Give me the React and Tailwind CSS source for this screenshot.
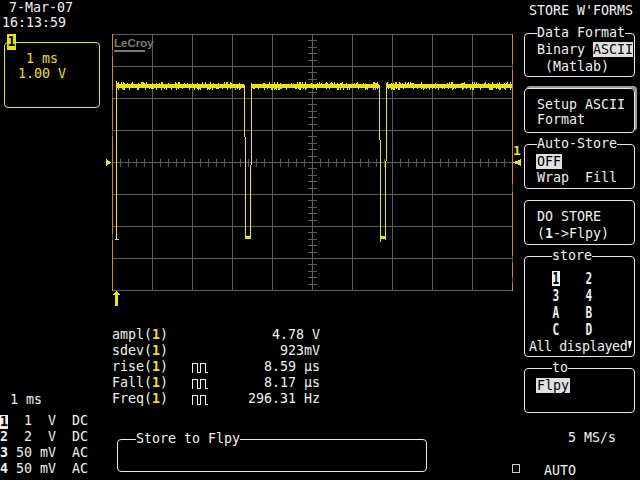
import React from "react";

const YEL = "#e8e800";
const GRID = "#5c5c5c";
const ORANGE = "#e08a00";

function rand(seed) {
  let s = seed;
  return () => {
    s = (s * 16807) % 2147483647;
    return s / 2147483647;
  };
}

function buildNoise() {
  const r = rand(12345);
  const ranges = [
    [5, 132],
    [140, 267],
    [275, 400],
  ];
  let d = "";
  for (const [a, b] of ranges) {
    for (let x = a; x < b; x++) {
      let top = 50;
      let bot = 54;
      if (r() < 0.3) top = 48 + Math.floor(r() * 2);
      if (r() < 0.3) bot = 55 + Math.floor(r() * 2);
      d += `M${x + 0.5} ${top}V${bot}`;
    }
  }
  return d;
}

const NOISE = buildNoise();

const TRACE =
  "M4.5 47V206M3 205.5H7" +
  "M132.5 51V103M133.5 103V205M133 202.5H139M133 203.5H139M133 204.5H139M138.5 205V131M139.5 131V49" +
  "M267.5 51V106M268.5 106V208M268 202.5H274M268 203.5H274M268 204.5H274M273.5 206V127M274.5 127V49";

function Grid() {
  const lines = [];
  for (let i = 1; i < 10; i++) {
    lines.push(<line key={"v" + i} x1={0.5 + 40 * i} y1={0} x2={0.5 + 40 * i} y2={257} stroke={GRID} />);
  }
  for (let j = 0; j <= 8; j++) {
    lines.push(<line key={"h" + j} x1={0} y1={0.5 + 32 * j} x2={401} y2={0.5 + 32 * j} stroke={GRID} />);
  }
  for (let k = 1; k < 40; k++) {
    if (k % 5 === 0) continue;
    const y = Math.round(6.4 * k) + 0.5;
    lines.push(<line key={"tv" + k} x1={196} y1={y} x2={205} y2={y} stroke={GRID} />);
  }
  for (let k = 1; k < 50; k++) {
    if (k % 5 === 0) continue;
    const x = 8 * k + 0.5;
    lines.push(<line key={"th" + k} x1={x} y1={125} x2={x} y2={133} stroke={GRID} />);
  }
  return (
    <svg width="400" height="256" viewBox="0 0 400 256" overflow="visible" shapeRendering="crispEdges" className="block overflow-visible">
      {lines}
      <line x1={0.5} y1={0} x2={0.5} y2={257} stroke={ORANGE} />
      <line x1={0.5} y1={16} x2={0.5} y2={22} stroke={GRID} />
      <line x1={0.5} y1={56} x2={0.5} y2={64} stroke={GRID} />
      <line x1={0.5} y1={96} x2={0.5} y2={102} stroke={GRID} />
      <line x1={0.5} y1={200} x2={0.5} y2={206} stroke={GRID} />
      <line x1={400.5} y1={0} x2={400.5} y2={257} stroke={ORANGE} />
      <line x1={400.5} y1={30} x2={400.5} y2={36} stroke={GRID} />
      <line x1={400.5} y1={150} x2={400.5} y2={158} stroke={GRID} />
      <line x1={400.5} y1={222} x2={400.5} y2={229} stroke={GRID} />
      <line x1={400.5} y1={243} x2={400.5} y2={249} stroke={GRID} />
      <path d={NOISE} stroke={YEL} strokeWidth="1" fill="none" />
      <path d={TRACE} stroke={YEL} strokeWidth="1" fill="none" />
      <polygon points="1,261 4.5,256.5 8,261" fill={YEL} />
      <rect x="3" y="260" width="3" height="12" fill={YEL} />
      <polygon points="-6,125 -1,128.5 -6,132" fill={YEL} />
      <polygon points="401,128.5 409,125 409,132" fill={YEL} />
    </svg>
  );
}

function Pulse() {
  return (
    <svg width="16" height="10" viewBox="0 0 16 10" shapeRendering="crispEdges">
      <path d="M0.5 9.5V0.5H5.5V9.5H8.5V0.5H13.5V9.5H15.5" stroke="#f0f0f0" fill="none" />
    </svg>
  );
}

function Meas({ name, pulse, value }) {
  return (
    <div className="flex w-[208px] h-[16px]">
      <div className="w-[80px] whitespace-pre">
        {name}(<span className="text-[#e8e800] font-bold">1</span>)
      </div>
      <div className="w-[16px] pt-[4px]">{pulse ? <Pulse /> : null}</div>
      <div className="flex-1 text-right whitespace-pre">{value}</div>
    </div>
  );
}

const chRows = [
  { n: "1", inv: true, t: "  1  V  DC" },
  { n: "2", t: "  2  V  DC" },
  { n: "3", t: " 50 mV  AC" },
  { n: "4", t: " 50 mV  AC" },
];

function StoreItem({ c, hi }) {
  return (
    <div
      className={
        "w-[8px] h-[15px] mt-[1px] flex justify-center items-center font-bold text-[13px] leading-[14px] " +
        (hi ? "bg-[#f0f0f0] text-black" : "")
      }
    >
      <span className="inline-block scale-x-[0.85] scale-y-[1.2]">{c}</span>
    </div>
  );
}

export default function App() {
  return (
    <div className="w-[640px] h-[480px] bg-black text-[#f0f0f0] font-['DejaVu_Sans_Mono',monospace] text-[13.3px] leading-[16px] flex overflow-hidden">
      {/* Left column */}
      <div className="w-[112px] shrink-0 flex flex-col">
        <div className="pl-[9px]">7-Mar-07</div>
        <div className="pl-[2px] -mt-[1px]">16:13:59</div>
        <div className="relative ml-[4px] mt-[11px] w-[96px] h-[66px] border border-[#e8e800] rounded-[4px] text-[#e8e800] pt-[8px] pl-[13px]">
          <div className="absolute left-[2px] -top-[9px] w-[9px] h-[16px] bg-[#e8e800] text-black font-bold text-center leading-[16px]">
            1
          </div>
          <div className="whitespace-pre"> 1 ms</div>
          <div className="-mt-[1px] whitespace-pre">1.00 V</div>
        </div>
        <div className="mt-auto pl-[10px]">1 ms</div>
        <div className="mt-[5px] pb-[3px]">
          {chRows.map((r) => (
            <div key={r.n} className="flex h-[16px]">
              <span
                className={
                  r.inv
                    ? "w-[8px] h-[14px] mt-[2px] bg-[#f0f0f0] text-black font-bold leading-[14px] text-center"
                    : "w-[8px] font-bold text-center"
                }
              >
                {r.n}
              </span>
              <span className="whitespace-pre">{r.t}</span>
            </div>
          ))}
        </div>
      </div>

      {/* Center column */}
      <div className="w-[400px] shrink-0 flex flex-col">
        <div className="relative mt-[34px] w-[400px] h-[256px]">
          <Grid />
          <div className="absolute left-[2px] top-[3px] flex flex-col">
            <span className="font-['Liberation_Sans',sans-serif] font-bold text-[11.5px] leading-[12px] text-[#7a7a7a]">LeCroy</span>
            <span className="mt-[1px] w-[31px] h-[2px] bg-[#7a7a7a]"></span>
          </div>
          <div className="absolute left-[401px] top-[109px] text-[#e8e800] font-bold text-[13px] leading-[16px]">1</div>
        </div>
        <div className="mt-[37px] flex flex-col">
          <Meas name="ampl" value="4.78 V" />
          <Meas name="sdev" value="923mV" />
          <Meas name="rise" pulse value="8.59 μs" />
          <Meas name="Fall" pulse value="8.17 μs" />
          <Meas name="Freq" pulse value="296.31 Hz" />
        </div>
        <fieldset className="mt-[24px] ml-[5px] w-[310px] h-[41px] border border-[#e8e8e8] rounded-[4px]">
          <legend className="ml-[18px]">Store to Flpy</legend>
        </fieldset>
      </div>

      {/* Right column */}
      <div className="w-[128px] shrink-0 flex flex-col">
        <div className="pt-[3px] pl-[17px] whitespace-pre">STORE W'FORMS</div>

        <fieldset className="mt-[6px] ml-[12px] w-[111px] border border-[#e8e8e8] rounded-[4px] pl-[12px] pt-[1px] pb-[1px]">
          <legend>Data Format</legend>
          <div className="whitespace-pre">
            Binary <span className="bg-[#e0e0e0] text-black">ASCII</span>
          </div>
          <div className="mt-[1px] whitespace-pre"> (Matlab)</div>
        </fieldset>

        <div className="mt-[11px] ml-[12px] w-[111px] border border-[#e8e8e8] rounded-[4px] pl-[12px] pt-[8px] pb-[4px] shadow-[2px_-2px_0_0_#9a9a9a]">
          <div>Setup ASCII</div>
          <div className="-mt-[1px]">Format</div>
        </div>

        <fieldset className="mt-[3px] ml-[12px] w-[111px] border border-[#e8e8e8] rounded-[4px] pl-[11px] pt-[2px] pb-[2px]">
          <legend className="ml-[1px]">Auto-Store</legend>
          <div>
            <span className="bg-[#e0e0e0] text-black px-[1px]">OFF</span>
          </div>
          <div className="whitespace-pre pl-[1px]">Wrap  Fill</div>
        </fieldset>

        <div className="mt-[11px] ml-[12px] w-[111px] border border-[#e8e8e8] rounded-[4px] pl-[12px] pt-[8px] pb-[2px]">
          <div>DO STORE</div>
          <div className="mt-[1px] whitespace-pre">
            (<span className="font-bold">1</span>-&gt;Flpy)
          </div>
        </div>

        <fieldset className="mt-[3px] ml-[12px] w-[111px] border border-[#e8e8e8] rounded-[4px] pl-[4px] pt-[6px] pb-[1px]">
          <legend className="ml-[23px]">store</legend>
          {[
            ["1", "2"],
            ["3", "4"],
            ["A", "B"],
            ["C", "D"],
          ].map((row, i) => (
            <div key={i} className="flex h-[17px] pl-[23px] gap-[25px]">
              <StoreItem c={row[0]} hi={i === 0} />
              <StoreItem c={row[1]} />
            </div>
          ))}
          <div className="mt-[1px] flex items-start">
            <span className="whitespace-pre tracking-[-0.45px]">All displayed</span>
            <svg width="4" height="8" viewBox="0 0 4 8" className="mt-[2px] ml-[1px]">
              <polygon points="0,0 4,0 2,7 1,7" fill="#f0f0f0" />
            </svg>
          </div>
        </fieldset>

        <fieldset className="mt-[3px] ml-[12px] w-[111px] border border-[#e8e8e8] rounded-[4px] pl-[11px] pt-[2px] pb-[18px]">
          <legend className="ml-[16px]">to</legend>
          <div>
            <span className="bg-[#e0e0e0] text-black px-[1px]">Flpy</span>
          </div>
        </fieldset>

        <div className="mt-[17px] pl-[56px] whitespace-pre">5 MS/s</div>

        <div className="mt-[17px] flex items-start">
          <span className="mt-[1px] w-[8px] h-[9px] border border-[#cccccc]"></span>
          <span className="ml-[24px]">AUTO</span>
        </div>
      </div>
    </div>
  );
}
